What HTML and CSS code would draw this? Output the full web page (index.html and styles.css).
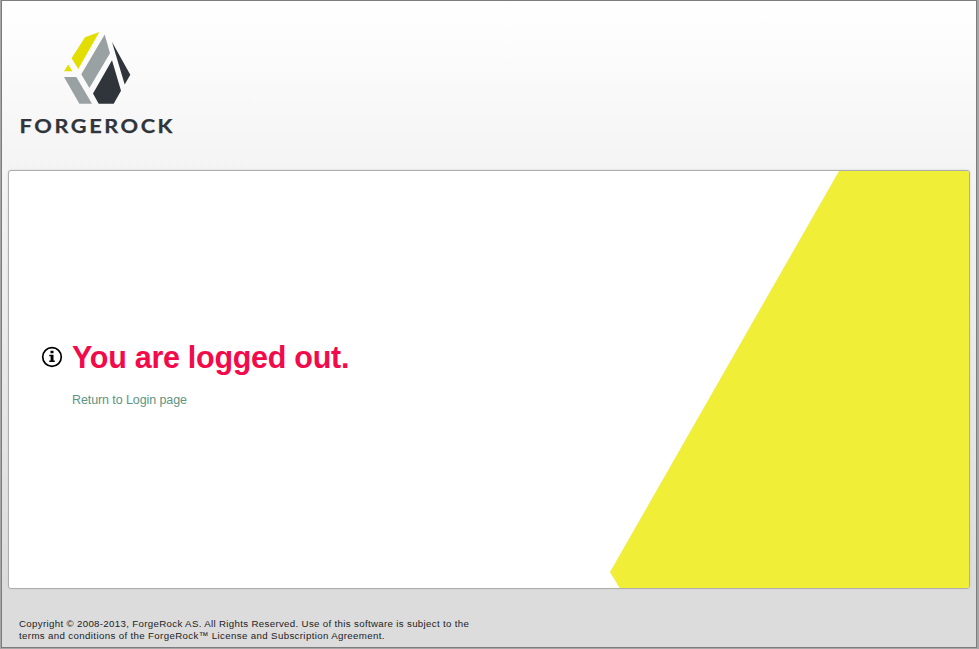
FILE: index.html
```html
<!DOCTYPE html>
<html lang="en">
<head>
<meta charset="utf-8">
<title>Logged out</title>
<link rel="stylesheet" href="styles.css">
</head>
<body>
<div class="window">
  <header class="header">
    <svg class="logo" width="156" height="108" viewBox="20 30 156 108" role="img" aria-label="ForgeRock">
      <path fill="#e2df00" d="M85 37.3 99.3 32 78.3 69 71.5 58.3ZM68.3 64.5 72.4 71.2H64Z"/>
      <path fill="#9aa1a3" d="M104.7 34.5 110 53.3 89.4 88 81.3 74.3ZM64 77H76.3L92 103.8H79.4Z"/>
      <path fill="#2f353a" d="M112 60.3 121 90.7 113.7 103.8H98.7L93 93.6ZM112 42 130.3 74.7 124.7 84.5Z"/>
      <text class="wordmark" x="19.6" y="133" textLength="155.5" lengthAdjust="spacingAndGlyphs">FORGEROCK</text>
    </svg>
  </header>
  <main class="panel">
    <svg class="info" width="22" height="22" viewBox="0 0 22 22" aria-hidden="true">
      <circle cx="11" cy="11" r="9.3" fill="none" stroke="#000" stroke-width="1.7"/>
      <path d="M9.5 4.8h3v2.5h-3zM8.3 8.8h4.2v5.7h1.3v1.5H8.3v-1.5h1.3v-4.2H8.3z"/>
    </svg>
    <div class="message">
      <h1 class="title">You are logged out.</h1>
      <a class="link">Return to Login page</a>
    </div>
  </main>
  <footer class="footer">Copyright © 2008-2013, ForgeRock AS. All Rights Reserved. Use of this software is subject to the<br><span class="terms">terms and conditions of the ForgeRock™ License and Subscription Agreement.</span></footer>
</div>
</body>
</html>
```
FILE: styles.css
```css
* { box-sizing: border-box; }
body {
  margin: 0;
  height: 649px;
  padding: 0 2px 1px 1px;
  overflow: hidden;
  background: #a6a6a6;
  font-family: "Liberation Sans", Arial, sans-serif;
}
.window {
  height: 648px;
  border: 1px solid #7d7d7d;
  padding: 0 6px;
  background: linear-gradient(#fff 0, #f4f4f4 169px, #dcdcdc 588px, #dcdcdc 100%);
}
.header { height: 169px; padding: 29px 12px 0; }
.logo { display: block; }
.wordmark {
  fill: #2f353a;
  stroke: #2f353a;
  stroke-width: .25px;
  font: 700 19.5px Lato, sans-serif;
  letter-spacing: 2.3px;
}
.panel {
  position: relative;
  display: flex;
  height: 419px;
  padding: 168px 0 0 32px;
  border: 1px solid #adadad;
  border-radius: 3px;
  background: #fff;
  box-shadow: 0 0 2px #ccc;
}
.panel::after {
  content: "";
  position: absolute;
  top: 0;
  right: 0;
  bottom: 0;
  width: 359px;
  border-radius: 0 2px 2px 0;
  background: #f0ee37;
  clip-path: polygon(229px 0, 100% 0, 100% 100%, 9.5px 100%, 0 401px);
}
.info { flex: none; margin: 7px 9px 0 0; }
.title {
  margin: 0;
  font-size: 30.5px;
  line-height: 36px;
  letter-spacing: -.28px;
  color: #f30a4b;
}
.link {
  display: block;
  margin-top: 17px;
  font-size: 12.5px;
  line-height: 16px;
  letter-spacing: -.09px;
  color: #5c9485;
}
.footer {
  padding: 29px 0 0 11px;
  font-size: 9.7px;
  line-height: 12px;
  letter-spacing: .33px;
  white-space: nowrap;
  color: #222;
}
.terms { letter-spacing: .36px; }
```
